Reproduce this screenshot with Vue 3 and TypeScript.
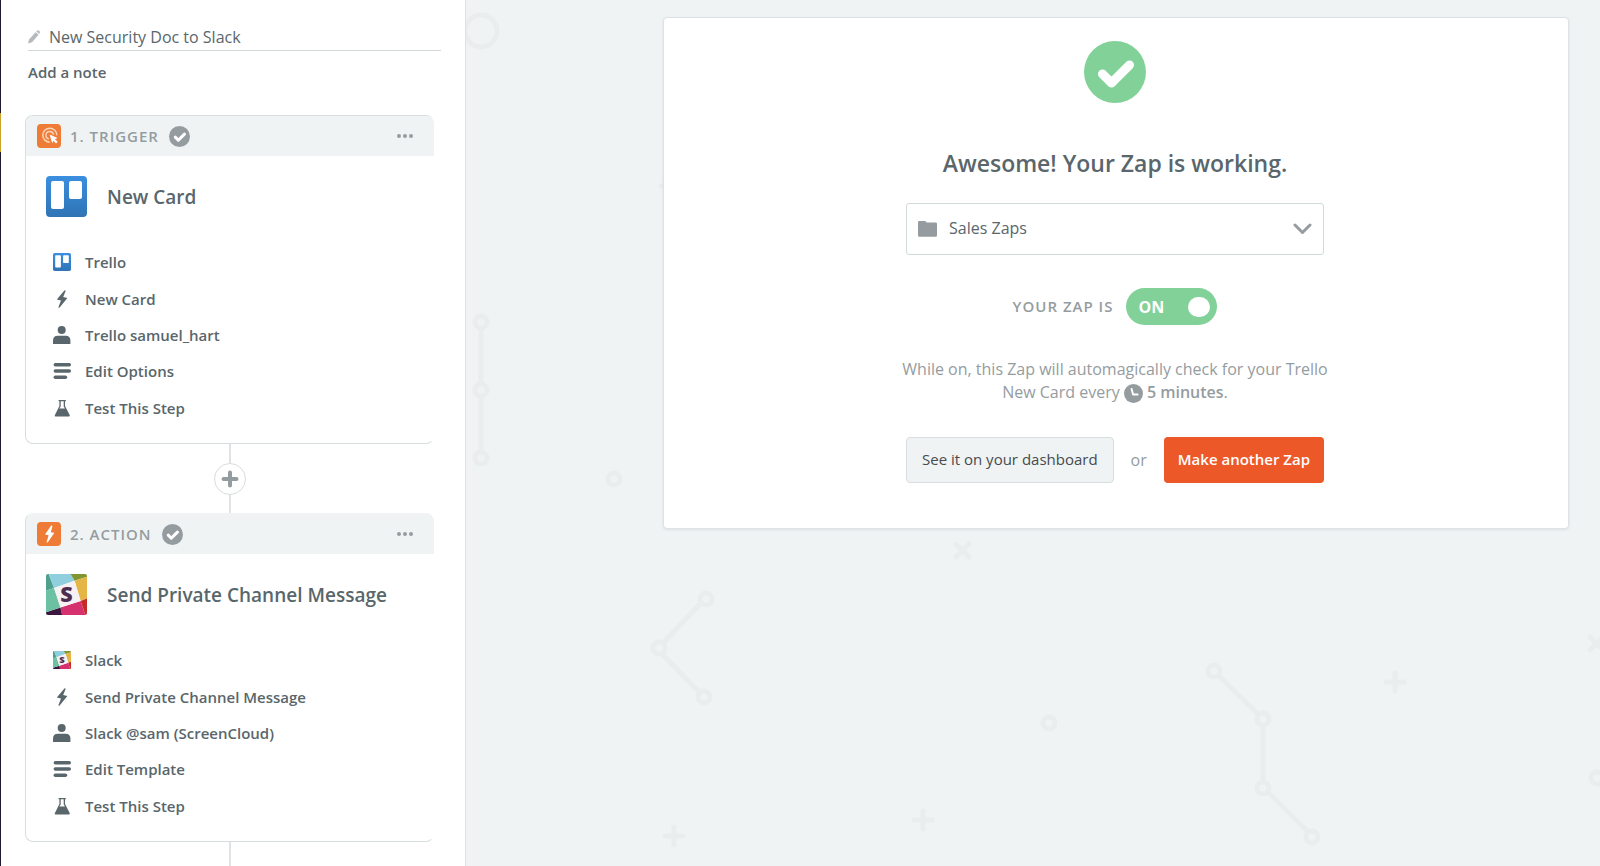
<script setup lang="ts">
import { ref } from 'vue'

type IconName = 'app' | 'bolt' | 'user' | 'lines' | 'flask'
type AppName = 'trello' | 'slack'

interface Row {
  icon: IconName
  label: string
}

interface Step {
  id: number
  kind: 'trigger' | 'action'
  heading: string
  app: AppName
  title: string
  rows: Row[]
}

const zapName = ref('New Security Doc to Slack')
const folder = ref('Sales Zaps')
const zapOn = ref(true)

const steps: Step[] = [
  {
    id: 1,
    kind: 'trigger',
    heading: '1. TRIGGER',
    app: 'trello',
    title: 'New Card',
    rows: [
      { icon: 'app', label: 'Trello' },
      { icon: 'bolt', label: 'New Card' },
      { icon: 'user', label: 'Trello samuel_hart' },
      { icon: 'lines', label: 'Edit Options' },
      { icon: 'flask', label: 'Test This Step' },
    ],
  },
  {
    id: 2,
    kind: 'action',
    heading: '2. ACTION',
    app: 'slack',
    title: 'Send Private Channel Message',
    rows: [
      { icon: 'app', label: 'Slack' },
      { icon: 'bolt', label: 'Send Private Channel Message' },
      { icon: 'user', label: 'Slack @sam (ScreenCloud)' },
      { icon: 'lines', label: 'Edit Template' },
      { icon: 'flask', label: 'Test This Step' },
    ],
  },
]
</script>

<template>
  <div class="page">
    <!-- Shared symbols for the step icons -->
    <svg class="defs" aria-hidden="true">
      <defs>
        <linearGradient id="trello-blue" x1="0" y1="0" x2="0" y2="1">
          <stop offset="0" stop-color="#3b8ee0" />
          <stop offset="1" stop-color="#2f74b5" />
        </linearGradient>
        <clipPath id="slack-clip"><rect width="122" height="122" rx="6" /></clipPath>
      </defs>
      <symbol id="trello" viewBox="0 0 41 41">
        <rect width="41" height="41" rx="4" fill="url(#trello-blue)" />
        <rect x="5" y="5" width="13" height="28" rx="2" fill="#fff" />
        <rect x="23" y="5" width="13" height="18" rx="2" fill="#fff" />
      </symbol>
      <symbol id="slack" viewBox="0 0 122 122">
        <g clip-path="url(#slack-clip)">
          <path d="M0 0H8L24 42L0 50Z" fill="#4fa08c" />
          <path d="M8 0H73L85 20L24 42Z" fill="#90cfde" />
          <path d="M73 0H122V8L85 20Z" fill="#7f9631" />
          <path d="M122 8V73L103 80L85 20Z" fill="#e5b546" />
          <path d="M122 73V122H117L103 80Z" fill="#c42b25" />
          <path d="M103 80L117 122H48L43 100Z" fill="#d5316f" />
          <path d="M43 100L48 122H0V114Z" fill="#3b163e" />
          <path d="M0 50L24 42L43 100L0 114Z" fill="#6bc1a1" />
          <path d="M24 42L85 20L103 80L43 100Z" fill="#f6f1f3" />
        </g>
      </symbol>
      <symbol id="bolt" viewBox="0 0 18 18">
        <path d="M11.6 0.3L3.8 9.6L8 10.6L5.4 17.2Q5.8 18.2 6.6 17.6L14.4 8L10.2 7.1L12.6 0.9Q12.3 0 11.6 0.3Z" />
      </symbol>
      <symbol id="user" viewBox="0 0 18 18">
        <circle cx="8.7" cy="4" r="4" />
        <path d="M0 18V14.5Q0 9.7 4.8 9.7H12.6Q17.4 9.7 17.4 14.5V18Z" />
      </symbol>
      <symbol id="lines" viewBox="0 0 18 18">
        <rect x="0.6" y="1" width="17.4" height="3.4" rx="1.7" />
        <rect x="0.6" y="7.3" width="17.4" height="3.4" rx="1.7" />
        <rect x="0.6" y="13.6" width="13.6" height="3.4" rx="1.7" />
      </symbol>
      <symbol id="flask" viewBox="0 0 18 18">
        <path d="M5.6 1H12.8V2.3H12V7L16.8 16.2Q17 17.4 15.8 17.4H2.6Q1.4 17.4 1.8 16.2L6.4 7V2.3H5.6ZM7.7 2.3V7.4L6.4 9.4H12L10.7 7.4V2.3Z" fill-rule="evenodd" />
      </symbol>
      <symbol id="check-badge" viewBox="0 0 62 62">
        <circle cx="31" cy="31" r="31" fill="currentColor" />
        <path d="M18.5 33L27.5 42L45.5 24" fill="none" stroke="#fff" stroke-width="9" stroke-linecap="round" stroke-linejoin="round" />
      </symbol>
    </svg>

    <div class="nav-edge"></div>

    <aside class="sidebar">
      <div class="name-field">
        <label for="zap-name" aria-label="Zap name">
          <svg width="12" height="14" viewBox="0 0 12 14">
            <path d="M0 13.6L1 9.6L7.6 2.2L10.6 4.8L4 12.3ZM8.3 1.4L9.3 0.4Q10 0 10.6 0.5L11.7 1.5Q12.2 2.2 11.7 2.8L11.2 4Z" fill="#b4babd" />
          </svg>
        </label>
        <input id="zap-name" v-model="zapName" type="text" />
      </div>
      <button type="button" class="note">Add a note</button>

      <div class="steps">
        <template v-for="step in steps" :key="step.id">
          <section class="card" :class="step.kind">
            <header class="card-head">
              <svg class="kind-icon" viewBox="0 0 24 24" aria-hidden="true">
                <rect width="24" height="24" rx="4" fill="#ee7c37" />
                <g v-if="step.kind === 'trigger'">
                  <path d="M12.8 18.2A7 7 0 1 1 19.8 11.2" fill="none" stroke="#fbd3b8" stroke-width="1.5" />
                  <path d="M11.8 14.9A3.8 3.8 0 1 1 16.5 10.6" fill="none" stroke="#fbd3b8" stroke-width="1.5" />
                  <path d="M12.6 10.6L20.6 14L18 15.2L20.6 17.8L19 19.4L16.4 16.8L15.2 19.2Z" fill="#fff" />
                </g>
                <path v-else d="M14.2 3.6L8 12.6L11.6 13.2L9.6 19.9Q10 20.8 10.8 20.2L17.4 10.8L13.8 10.2L15.4 4.2Q15 3.2 14.2 3.6Z" fill="#fff" />
              </svg>
              <h2>{{ step.heading }}</h2>
              <svg class="done" aria-label="Complete"><use href="#check-badge" /></svg>
              <button type="button" class="more" aria-label="Step menu">
                <svg width="16" height="4" viewBox="0 0 16 4">
                  <circle cx="2" cy="2" r="2" /><circle cx="8" cy="2" r="2" /><circle cx="14" cy="2" r="2" />
                </svg>
              </button>
            </header>
            <div class="app-row">
              <svg viewBox="0 0 122 122" aria-hidden="true">
                <use :href="'#' + step.app" />
                <text v-if="step.app === 'slack'" class="slack-s" x="61" y="82">S</text>
              </svg>
              <h3>{{ step.title }}</h3>
            </div>
            <ul class="rows">
              <li v-for="row in step.rows" :key="row.label">
                <button type="button">
                  <svg viewBox="0 0 122 122" aria-hidden="true">
                    <use :href="'#' + (row.icon === 'app' ? step.app : row.icon)" />
                    <text v-if="row.icon === 'app' && step.app === 'slack'" class="slack-s" x="61" y="82">S</text>
                  </svg>
                  {{ row.label }}
                </button>
              </li>
            </ul>
          </section>
          <div class="connector">
            <button v-if="step.id === 1" type="button" aria-label="Add a step">
              <svg width="18" height="18" viewBox="0 0 18 18">
                <path d="M9 2.5V15.5M2.5 9H15.5" stroke="#959c9f" stroke-width="4" stroke-linecap="round" />
              </svg>
            </button>
          </div>
        </template>
      </div>
    </aside>

    <main class="main">
      <svg class="pattern" aria-hidden="true">
        <g>
          <circle cx="15" cy="31" r="16" />
          <path d="M15 330V382M15 398V450M195 186H213" />
          <circle cx="15" cy="322" r="6" /><circle cx="15" cy="390" r="6" /><circle cx="15" cy="458" r="6" />
          <circle cx="148" cy="479" r="6" />
          <path d="M234 604L197 643M196 654L234 693" />
          <circle cx="240" cy="599" r="6" /><circle cx="193" cy="648" r="6" /><circle cx="238" cy="697" r="6" />
          <path d="M490 544L503 557M503 544L490 557" />
          <circle cx="583" cy="723" r="6" />
          <path d="M199 836H217M208 827V845M448 820H466M457 811V829M920 682H938M929 673V691" />
          <path d="M754 677L792 714M797 727V780M803 793L841 831" />
          <circle cx="748" cy="671" r="6" /><circle cx="797" cy="719" r="6" /><circle cx="797" cy="788" r="6" /><circle cx="846" cy="837" r="6" />
          <path d="M1124 637L1137 650M1137 637L1124 650" />
          <circle cx="1131" cy="778" r="6" />
        </g>
      </svg>

      <section class="panel">
        <svg class="success" aria-hidden="true"><use href="#check-badge" /></svg>
        <h1>Awesome! Your Zap is working.</h1>

        <div class="folder">
          <svg class="folder-icon" width="19" height="16" viewBox="0 0 19 16" aria-hidden="true">
            <path d="M0 1.2Q0 0 1.2 0H7Q8 0 8.6 1.6H17.8Q19 1.6 19 2.8V14.6Q19 15.8 17.8 15.8H1.2Q0 15.8 0 14.6Z" fill="#959c9f" />
          </svg>
          <select v-model="folder" aria-label="Folder">
            <option>Sales Zaps</option>
          </select>
          <svg class="chevron" width="19" height="12" viewBox="0 0 19 12" aria-hidden="true">
            <path d="M2 2L9.5 9.5L17 2" fill="none" stroke="#959c9f" stroke-width="3" stroke-linecap="round" stroke-linejoin="round" />
          </svg>
        </div>

        <div class="power">
          <label for="zap-on">YOUR ZAP IS</label>
          <span class="toggle" :class="{ off: !zapOn }">
            <input id="zap-on" v-model="zapOn" type="checkbox" />
            <span>{{ zapOn ? 'ON' : 'OFF' }}</span>
            <i></i>
          </span>
        </div>

        <p class="about">
          While on, this Zap will automagically check for your Trello New Card every
          <svg width="19" height="19" viewBox="0 0 19 19" aria-hidden="true">
            <circle cx="9.5" cy="9.5" r="9.5" fill="#959c9f" />
            <path d="M7.6 5L9.1 10.4H13.6" fill="none" stroke="#fff" stroke-width="2" stroke-linecap="round" stroke-linejoin="round" />
          </svg>
          <strong>5 minutes</strong>.
        </p>

        <div class="actions">
          <button type="button" class="secondary">See it on your dashboard</button>
          <span>or</span>
          <button type="button" class="primary">Make another Zap</button>
        </div>
      </section>
    </main>
  </div>
</template>

<style>
body {
  margin: 0;
}
</style>

<style scoped>
.page {
  display: flex;
  height: 100vh;
  overflow: hidden;
  font-family: 'Open Sans', 'Noto Sans', sans-serif;
  color: #59666b;
  background: #fff;
}

.page *,
.page *::before {
  box-sizing: border-box;
}

.defs {
  position: absolute;
  width: 0;
  height: 0;
}

.slack-s {
  font: 800 64px 'Open Sans', sans-serif;
  fill: #4f2d50;
  text-anchor: middle;
}

h1,
h2,
h3,
p,
ul {
  margin: 0;
  padding: 0;
}

button,
input,
select {
  font: inherit;
  color: inherit;
  border: 0;
  padding: 0;
  margin: 0;
  background: none;
}

button {
  cursor: pointer;
}

svg {
  display: block;
  flex: none;
}

.nav-edge {
  flex: none;
  width: 1px;
  background: linear-gradient(#1f1930 113px, #c9a22b 113px, #c9a22b 152px, #1f1930 152px);
}

.sidebar {
  flex: none;
  display: flex;
  flex-direction: column;
  width: 465px;
  padding: 24px 24px 0 24px;
  border-right: 1px solid #dde2e4;
}

.name-field {
  flex: none;
  display: flex;
  align-items: center;
  gap: 9px;
  height: 27px;
  margin-left: 3px;
  border-bottom: 1px solid #d2d7d9;
}

.name-field input {
  flex: 1;
  min-width: 0;
  font-size: 16px;
  outline: none;
}

.note {
  flex: none;
  align-self: flex-start;
  margin: 11px 0 0 3px;
  font-size: 15px;
  font-weight: 600;
  line-height: 20px;
}

.steps {
  display: flex;
  flex-direction: column;
  flex: 1;
  margin: 33px 7px 0 0;
}

.card {
  flex: none;
  border: 1px solid #d8dddf;
  border-right-color: transparent;
  border-radius: 8px;
}

.card.action {
  border-top-color: #eff3f4;
}

.card-head {
  display: flex;
  align-items: center;
  height: 40px;
  padding: 0 21px 0 11px;
  margin-right: -1px;
  border-radius: 7px 7px 0 0;
  background: #eff3f4;
  color: #959c9f;
}

.kind-icon {
  width: 24px;
  height: 24px;
}

.card-head h2 {
  margin-left: 9px;
  font-size: 15px;
  font-weight: 600;
  letter-spacing: 1px;
}

.done {
  width: 21px;
  height: 21px;
  margin-left: 10px;
}

.more {
  margin-left: auto;
  fill: #959c9f;
}

.app-row {
  display: flex;
  align-items: center;
  gap: 20px;
  padding: 20px 20px 0;
}

.app-row svg {
  width: 41px;
  height: 41px;
}

.app-row h3 {
  font-size: 19px;
  font-weight: 600;
}

.rows {
  display: grid;
  grid-auto-rows: 1fr;
  height: 182px;
  margin: 27px 0 17px 27px;
  list-style: none;
}

.rows li {
  display: flex;
  align-items: center;
}

.rows button {
  display: flex;
  align-items: center;
  gap: 14px;
  font-size: 15px;
  font-weight: 600;
  line-height: 20px;
}

.rows svg {
  width: 18px;
  height: 18px;
  fill: #59666b;
}

.connector {
  flex: none;
  display: flex;
  align-items: center;
  justify-content: center;
  height: 69px;
  background: linear-gradient(#dfe3e6, #dfe3e6) center / 2px 100% no-repeat;
}

.connector button {
  display: flex;
  align-items: center;
  justify-content: center;
  width: 32px;
  height: 32px;
  border: 1px solid #d8dddf;
  border-radius: 50%;
  background: #fff;
}

.main {
  position: relative;
  flex: 1;
  min-width: 0;
  padding: 17px 31px 0 197px;
  background: #eff3f4;
}

.pattern {
  position: absolute;
  inset: 0;
  width: 100%;
  height: 100%;
  fill: none;
  stroke: #e9edee;
  stroke-width: 5;
  stroke-linecap: round;
}

.panel {
  position: relative;
  display: flex;
  flex-direction: column;
  align-items: center;
  padding: 23px 25px 45px 23px;
  border: 1px solid #dde2e5;
  border-radius: 4px;
  background: #fff;
  box-shadow: 0 1px 3px rgba(60, 80, 90, 0.1);
}

.success {
  width: 62px;
  height: 62px;
  color: #81d198;
}

h1 {
  margin-top: 44px;
  font-size: 23px;
  font-weight: 600;
  line-height: 32px;
}

.folder {
  position: relative;
  width: 418px;
  max-width: 100%;
  margin-top: 24px;
}

.folder select {
  appearance: none;
  display: block;
  width: 100%;
  height: 52px;
  padding: 0 48px 2px 42px;
  border: 1px solid #d2d9db;
  border-radius: 3px;
  background: #fff;
  font-size: 16px;
}

.folder-icon {
  position: absolute;
  left: 12px;
  top: 18px;
}

.chevron {
  position: absolute;
  right: 12px;
  top: 20px;
}

.power {
  display: flex;
  align-items: center;
  gap: 13px;
  margin-top: 33px;
}

.power label {
  padding-bottom: 2px;
  font-size: 15px;
  font-weight: 600;
  letter-spacing: 1px;
  color: #959c9f;
}

.toggle {
  position: relative;
  display: flex;
  align-items: center;
  justify-content: space-between;
  width: 91px;
  height: 37px;
  padding: 0 7px 0 12px;
  border-radius: 19px;
  background: #81d198;
  color: #fff;
  font-size: 16px;
  font-weight: 700;
}

.toggle.off {
  background: #959c9f;
}

.toggle input {
  position: absolute;
  inset: 0;
  width: 100%;
  height: 100%;
  opacity: 0;
  cursor: pointer;
}

.toggle i {
  width: 22px;
  height: 20px;
  border-radius: 10px;
  background: #fff;
}

.about {
  width: 440px;
  max-width: 100%;
  margin-top: 33px;
  font-size: 16px;
  line-height: 23px;
  text-align: center;
  color: #959c9f;
}

.about svg {
  display: inline-block;
  margin-right: 4px;
  vertical-align: -5px;
}

.about strong {
  font-weight: 600;
}

.actions {
  display: flex;
  align-items: center;
  justify-content: space-between;
  width: 418px;
  max-width: 100%;
  margin-top: 33px;
  color: #959c9f;
  font-size: 16px;
}

.actions button {
  height: 46px;
  padding: 0 15px 2px;
  border-radius: 4px;
  font-size: 15px;
}

.secondary {
  border: 1px solid #d8dee0;
  background: #eff3f4;
  color: #474b4e;
}

.actions .primary {
  padding: 0 14px 2px;
  background: #ed5829;
  color: #fff;
  font-weight: 600;
}
</style>
